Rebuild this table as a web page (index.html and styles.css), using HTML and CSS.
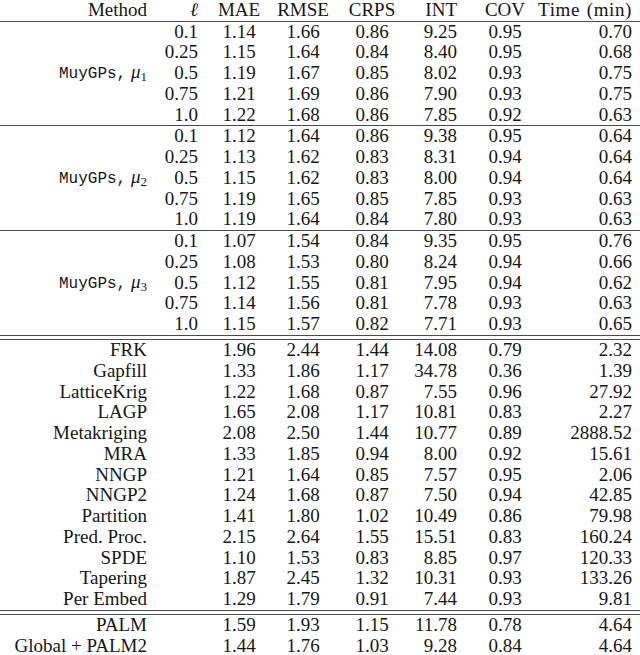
FILE: index.html
```html
<!DOCTYPE html>
<html>
<head>
<meta charset="utf-8">
<link rel="stylesheet" href="styles.css">
</head>
<body>
<div class="tbl">
  <div class="grp head">
    <div class="c m">Method</div><div class="c l"><span class="ell">ℓ</span></div><div class="c mae">MAE</div><div class="c rmse">RMSE</div><div class="c crps">CRPS</div><div class="c int">INT</div><div class="c cov">COV</div><div class="c time wide">Time (min)</div>
  </div>

  <div class="grp">
    <div class="c m span5"><span class="tt">MuyGPs,</span>&nbsp;<i class="gk">μ</i><sub>1</sub></div>
    <div class="c l">0.1</div><div class="c mae">1.14</div><div class="c rmse">1.66</div><div class="c crps">0.86</div><div class="c int">9.25</div><div class="c cov">0.95</div><div class="c time">0.70</div>
    <div class="c l">0.25</div><div class="c mae">1.15</div><div class="c rmse">1.64</div><div class="c crps">0.84</div><div class="c int">8.40</div><div class="c cov">0.95</div><div class="c time">0.68</div>
    <div class="c l">0.5</div><div class="c mae">1.19</div><div class="c rmse">1.67</div><div class="c crps">0.85</div><div class="c int">8.02</div><div class="c cov">0.93</div><div class="c time">0.75</div>
    <div class="c l">0.75</div><div class="c mae">1.21</div><div class="c rmse">1.69</div><div class="c crps">0.86</div><div class="c int">7.90</div><div class="c cov">0.93</div><div class="c time">0.75</div>
    <div class="c l">1.0</div><div class="c mae">1.22</div><div class="c rmse">1.68</div><div class="c crps">0.86</div><div class="c int">7.85</div><div class="c cov">0.92</div><div class="c time">0.63</div>
  </div>

  <div class="grp">
    <div class="c m span5"><span class="tt">MuyGPs,</span>&nbsp;<i class="gk">μ</i><sub>2</sub></div>
    <div class="c l">0.1</div><div class="c mae">1.12</div><div class="c rmse">1.64</div><div class="c crps">0.86</div><div class="c int">9.38</div><div class="c cov">0.95</div><div class="c time">0.64</div>
    <div class="c l">0.25</div><div class="c mae">1.13</div><div class="c rmse">1.62</div><div class="c crps">0.83</div><div class="c int">8.31</div><div class="c cov">0.94</div><div class="c time">0.64</div>
    <div class="c l">0.5</div><div class="c mae">1.15</div><div class="c rmse">1.62</div><div class="c crps">0.83</div><div class="c int">8.00</div><div class="c cov">0.94</div><div class="c time">0.64</div>
    <div class="c l">0.75</div><div class="c mae">1.19</div><div class="c rmse">1.65</div><div class="c crps">0.85</div><div class="c int">7.85</div><div class="c cov">0.93</div><div class="c time">0.63</div>
    <div class="c l">1.0</div><div class="c mae">1.19</div><div class="c rmse">1.64</div><div class="c crps">0.84</div><div class="c int">7.80</div><div class="c cov">0.93</div><div class="c time">0.63</div>
  </div>

  <div class="grp dbl">
    <div class="c m span5"><span class="tt">MuyGPs,</span>&nbsp;<i class="gk">μ</i><sub>3</sub></div>
    <div class="c l">0.1</div><div class="c mae">1.07</div><div class="c rmse">1.54</div><div class="c crps">0.84</div><div class="c int">9.35</div><div class="c cov">0.95</div><div class="c time">0.76</div>
    <div class="c l">0.25</div><div class="c mae">1.08</div><div class="c rmse">1.53</div><div class="c crps">0.80</div><div class="c int">8.24</div><div class="c cov">0.94</div><div class="c time">0.66</div>
    <div class="c l">0.5</div><div class="c mae">1.12</div><div class="c rmse">1.55</div><div class="c crps">0.81</div><div class="c int">7.95</div><div class="c cov">0.94</div><div class="c time">0.62</div>
    <div class="c l">0.75</div><div class="c mae">1.14</div><div class="c rmse">1.56</div><div class="c crps">0.81</div><div class="c int">7.78</div><div class="c cov">0.93</div><div class="c time">0.63</div>
    <div class="c l">1.0</div><div class="c mae">1.15</div><div class="c rmse">1.57</div><div class="c crps">0.82</div><div class="c int">7.71</div><div class="c cov">0.93</div><div class="c time">0.65</div>
  </div>

  <div class="grp dbl after">
    <div class="c m">FRK</div><div class="c l"></div><div class="c mae">1.96</div><div class="c rmse">2.44</div><div class="c crps">1.44</div><div class="c int">14.08</div><div class="c cov">0.79</div><div class="c time">2.32</div>
    <div class="c m">Gapfill</div><div class="c l"></div><div class="c mae">1.33</div><div class="c rmse">1.86</div><div class="c crps">1.17</div><div class="c int">34.78</div><div class="c cov">0.36</div><div class="c time">1.39</div>
    <div class="c m">LatticeKrig</div><div class="c l"></div><div class="c mae">1.22</div><div class="c rmse">1.68</div><div class="c crps">0.87</div><div class="c int">7.55</div><div class="c cov">0.96</div><div class="c time">27.92</div>
    <div class="c m">LAGP</div><div class="c l"></div><div class="c mae">1.65</div><div class="c rmse">2.08</div><div class="c crps">1.17</div><div class="c int">10.81</div><div class="c cov">0.83</div><div class="c time">2.27</div>
    <div class="c m">Metakriging</div><div class="c l"></div><div class="c mae">2.08</div><div class="c rmse">2.50</div><div class="c crps">1.44</div><div class="c int">10.77</div><div class="c cov">0.89</div><div class="c time">2888.52</div>
    <div class="c m">MRA</div><div class="c l"></div><div class="c mae">1.33</div><div class="c rmse">1.85</div><div class="c crps">0.94</div><div class="c int">8.00</div><div class="c cov">0.92</div><div class="c time">15.61</div>
    <div class="c m">NNGP</div><div class="c l"></div><div class="c mae">1.21</div><div class="c rmse">1.64</div><div class="c crps">0.85</div><div class="c int">7.57</div><div class="c cov">0.95</div><div class="c time">2.06</div>
    <div class="c m">NNGP2</div><div class="c l"></div><div class="c mae">1.24</div><div class="c rmse">1.68</div><div class="c crps">0.87</div><div class="c int">7.50</div><div class="c cov">0.94</div><div class="c time">42.85</div>
    <div class="c m">Partition</div><div class="c l"></div><div class="c mae">1.41</div><div class="c rmse">1.80</div><div class="c crps">1.02</div><div class="c int">10.49</div><div class="c cov">0.86</div><div class="c time">79.98</div>
    <div class="c m">Pred. Proc.</div><div class="c l"></div><div class="c mae">2.15</div><div class="c rmse">2.64</div><div class="c crps">1.55</div><div class="c int">15.51</div><div class="c cov">0.83</div><div class="c time">160.24</div>
    <div class="c m">SPDE</div><div class="c l"></div><div class="c mae">1.10</div><div class="c rmse">1.53</div><div class="c crps">0.83</div><div class="c int">8.85</div><div class="c cov">0.97</div><div class="c time">120.33</div>
    <div class="c m">Tapering</div><div class="c l"></div><div class="c mae">1.87</div><div class="c rmse">2.45</div><div class="c crps">1.32</div><div class="c int">10.31</div><div class="c cov">0.93</div><div class="c time">133.26</div>
    <div class="c m">Per Embed</div><div class="c l"></div><div class="c mae">1.29</div><div class="c rmse">1.79</div><div class="c crps">0.91</div><div class="c int">7.44</div><div class="c cov">0.93</div><div class="c time">9.81</div>
  </div>

  <div class="grp after last">
    <div class="c m">PALM</div><div class="c l"></div><div class="c mae">1.59</div><div class="c rmse">1.93</div><div class="c crps">1.15</div><div class="c int">11.78</div><div class="c cov">0.78</div><div class="c time">4.64</div>
    <div class="c m">Global + PALM2</div><div class="c l"></div><div class="c mae">1.44</div><div class="c rmse">1.76</div><div class="c crps">1.03</div><div class="c int">9.28</div><div class="c cov">0.84</div><div class="c time">4.64</div>
  </div>
</div>
</body>
</html>
```

FILE: styles.css
```css
html, body {
  margin: 0;
  padding: 0;
  background: #ffffff;
}

body {
  width: 640px;
  height: 655px;
  overflow: hidden;
  font-family: "Liberation Serif", "Tinos", "DejaVu Serif", serif;
  font-size: 19px;
  color: #161616;
}

.tbl {
  display: flex;
  flex-direction: column;
}

.grp {
  display: grid;
  grid-template-columns: 150px 55px 68px 60px 78px 67px 54px 108px;
  grid-auto-rows: 20.77px;
  border-bottom: 1px solid #4a4a4a;
}

.grp.head {
  grid-auto-rows: 20.5px;
}

.grp.after {
  margin-top: 3px;
  border-top: 1px solid #4a4a4a;
}

.grp.last {
  border-bottom: none;
}

.c {
  white-space: nowrap;
  line-height: 20.77px;
}

.m { text-align: right; padding-right: 3px; }
.l { text-align: right; padding-right: 7px; }
.mae, .rmse, .crps, .cov { text-align: center; }
.int { text-align: right; padding-right: 21px; }
.time { text-align: right; padding-right: 8px; }

.time.wide {
  letter-spacing: 0.6px;
  word-spacing: 1.5px;
  padding-right: 8px;
}

.span5 {
  grid-column: 1;
  grid-row: 1 / span 5;
  align-self: center;
}

.tt {
  font-family: "Liberation Mono", "Courier New", monospace;
  font-size: 16px;
}

.gk {
  font-style: italic;
}

sub {
  font-size: 13px;
  line-height: 0;
  vertical-align: -3px;
}

.ell {
  font-style: italic;
}
```
